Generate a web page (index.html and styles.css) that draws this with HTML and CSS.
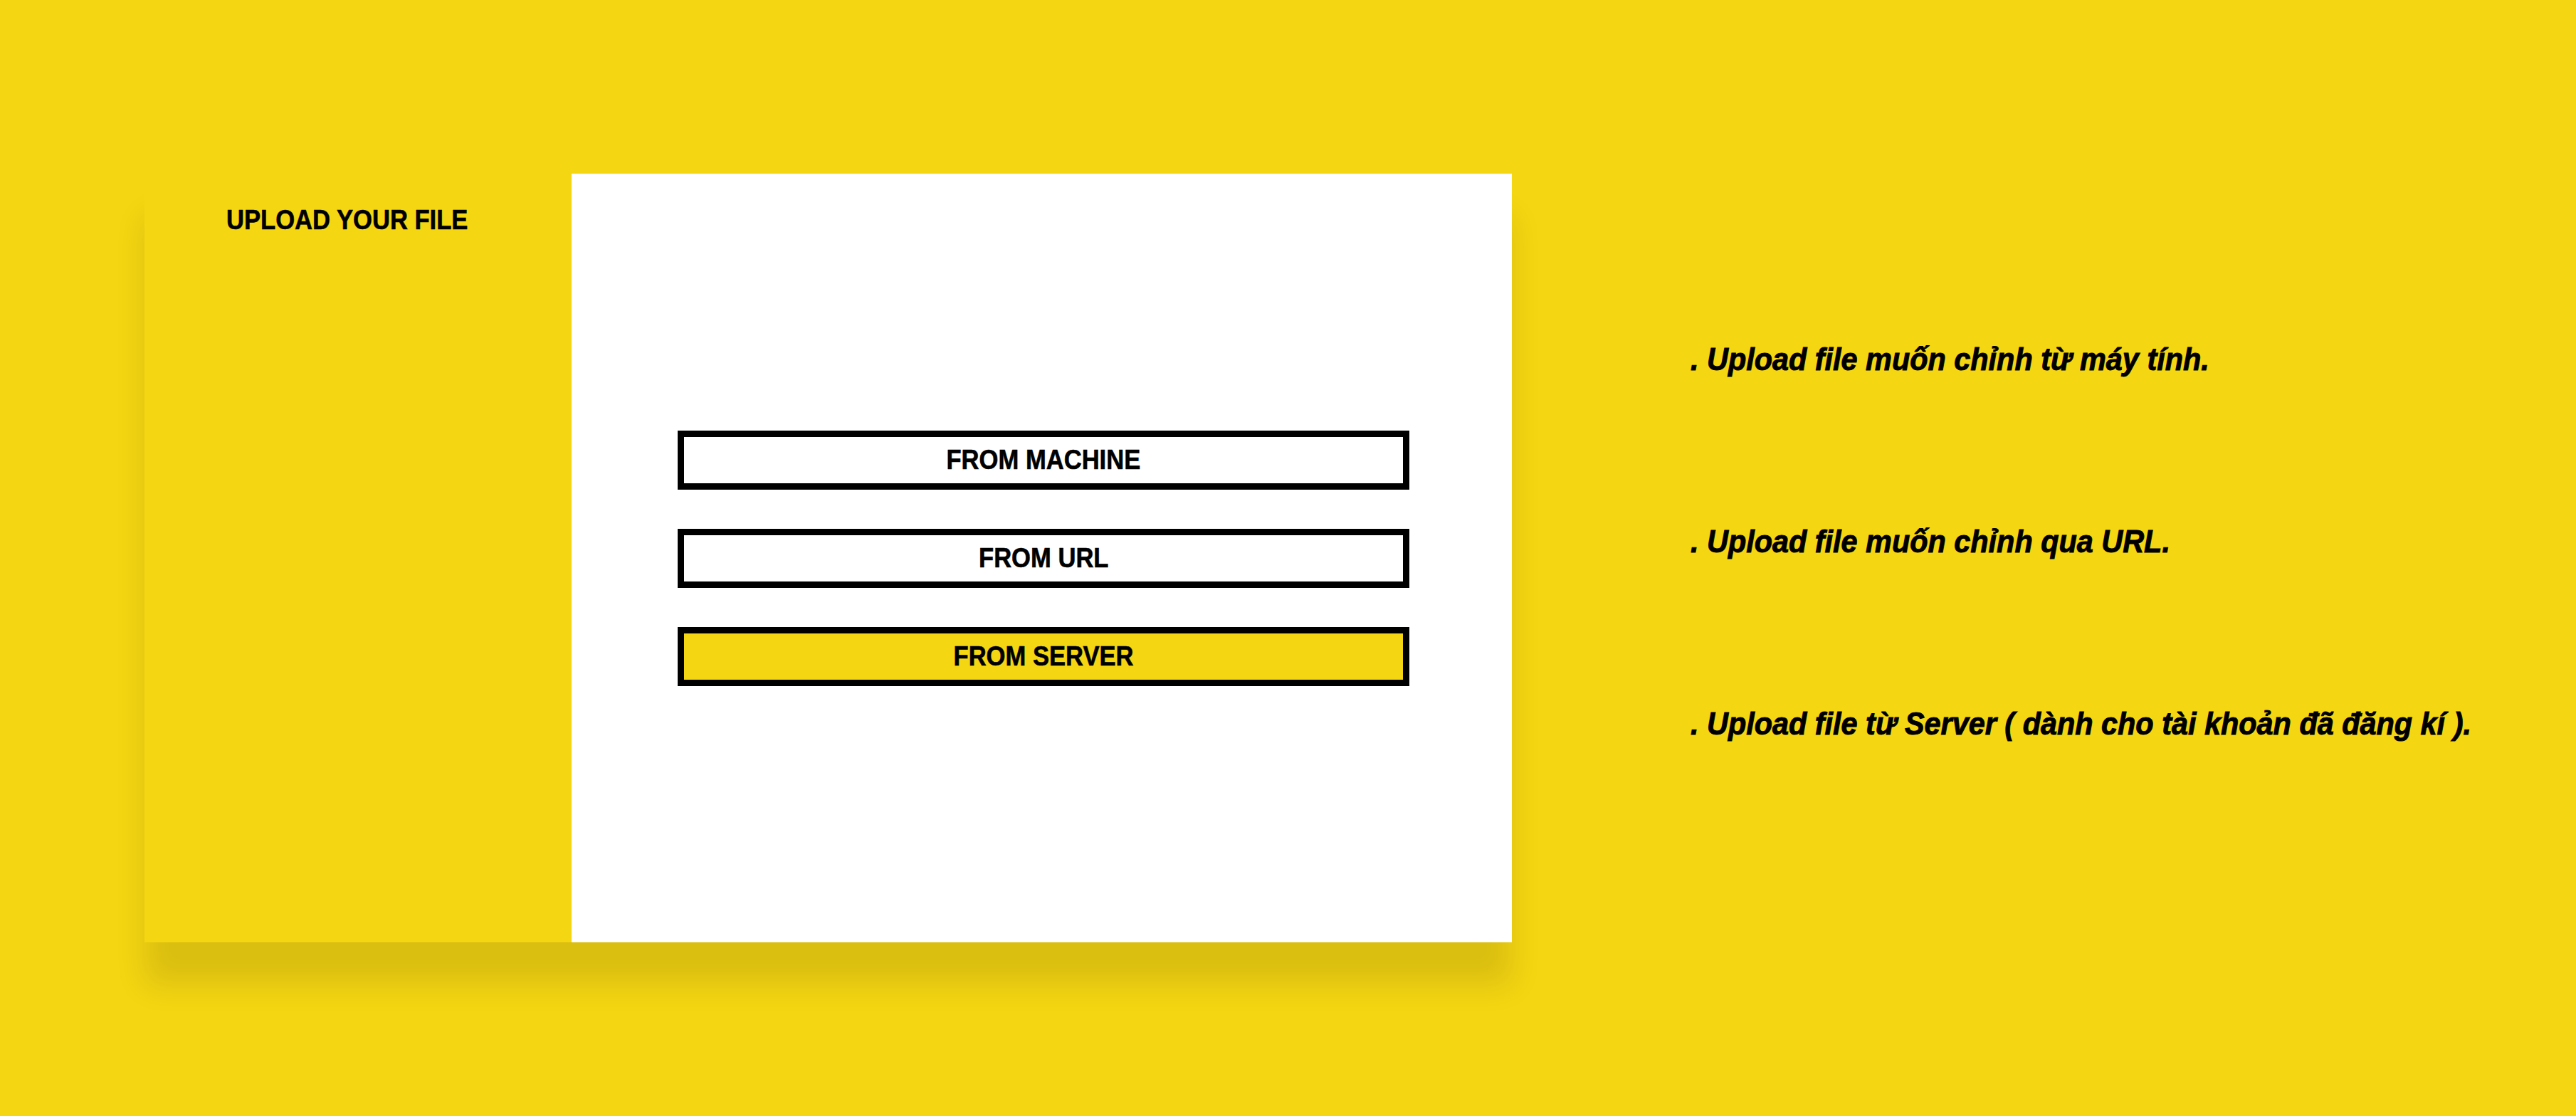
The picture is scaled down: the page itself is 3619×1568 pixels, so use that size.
FILE: index.html
```html
<!DOCTYPE html>
<html lang="vi">
<head>
<meta charset="utf-8">
<title>Upload your file</title>
<link rel="stylesheet" href="styles.css">
</head>
<body>
<main class="page">
  <section class="card">
    <aside class="card-side">
      <h1 class="card-title"><span class="narrow narrow-left">UPLOAD YOUR FILE</span></h1>
    </aside>
    <div class="card-body">
      <button class="option"><span class="narrow">FROM MACHINE</span></button>
      <button class="option"><span class="narrow">FROM URL</span></button>
      <button class="option option-active"><span class="narrow">FROM SERVER</span></button>
    </div>
  </section>
  <ul class="notes">
    <li class="note"><span class="note-text">. Upload file muốn chỉnh từ máy tính.</span></li>
    <li class="note"><span class="note-text">. Upload file muốn chỉnh qua URL.</span></li>
    <li class="note"><span class="note-text">. Upload file từ Server ( dành cho tài khoản đã đăng kí ).</span></li>
  </ul>
</main>
</body>
</html>
```

FILE: styles.css
```css
html, body {
  margin: 0;
  padding: 0;
}
body {
  background: #f5d612;
  width: 3619px;
  height: 1568px;
  overflow: hidden;
  color: #000;
}
.page {
  display: flex;
  align-items: flex-start;
  padding: 244px 0 0 203px;
}
.card {
  display: flex;
  width: 1921px;
  height: 1080px;
  box-shadow: 0 60px 40px rgba(0, 0, 0, 0.11);
  flex-shrink: 0;
}
.card-side {
  width: 600px;
  background: #f5d612;
  padding: 46px 0 0 115px;
  box-sizing: border-box;
}
.card-title {
  margin: 0;
  font-family: "Liberation Sans", Arial, sans-serif;
  font-weight: 700;
  font-size: 38px;
  line-height: 38px;
  letter-spacing: 0;
  -webkit-text-stroke: 0.6px #000;
}
.narrow {
  display: inline-block;
  transform: scaleX(0.91);
  transform-origin: center;
}
.narrow-left {
  transform-origin: left center;
}
.card-body {
  flex: 1;
  background: #fff;
  display: flex;
  flex-direction: column;
  justify-content: center;
  gap: 55px;
  padding: 0 144px 0 149px;
}
.option {
  display: block;
  width: 100%;
  height: 83px;
  box-sizing: border-box;
  border: 9px solid #000;
  background: #fff;
  margin: 0;
  padding: 0;
  font-family: "Liberation Sans", Arial, sans-serif;
  font-weight: 700;
  font-size: 38px;
  line-height: 38px;
  color: #000;
  text-align: center;
  -webkit-text-stroke: 0.6px #000;
}
.option-active {
  background: #f5d612;
}
.notes {
  list-style: none;
  margin: 0;
  padding: 231px 0 0 251px;
  display: flex;
  flex-direction: column;
  gap: 196px;
}
.note {
  font-family: "Liberation Sans", Arial, sans-serif;
  font-weight: 700;
  font-style: italic;
  font-size: 45px;
  line-height: 60px;
  white-space: nowrap;
  -webkit-text-stroke: 1px #000;
}
.note-text {
  display: inline-block;
  transform: scaleX(0.92);
  transform-origin: left center;
}
```
